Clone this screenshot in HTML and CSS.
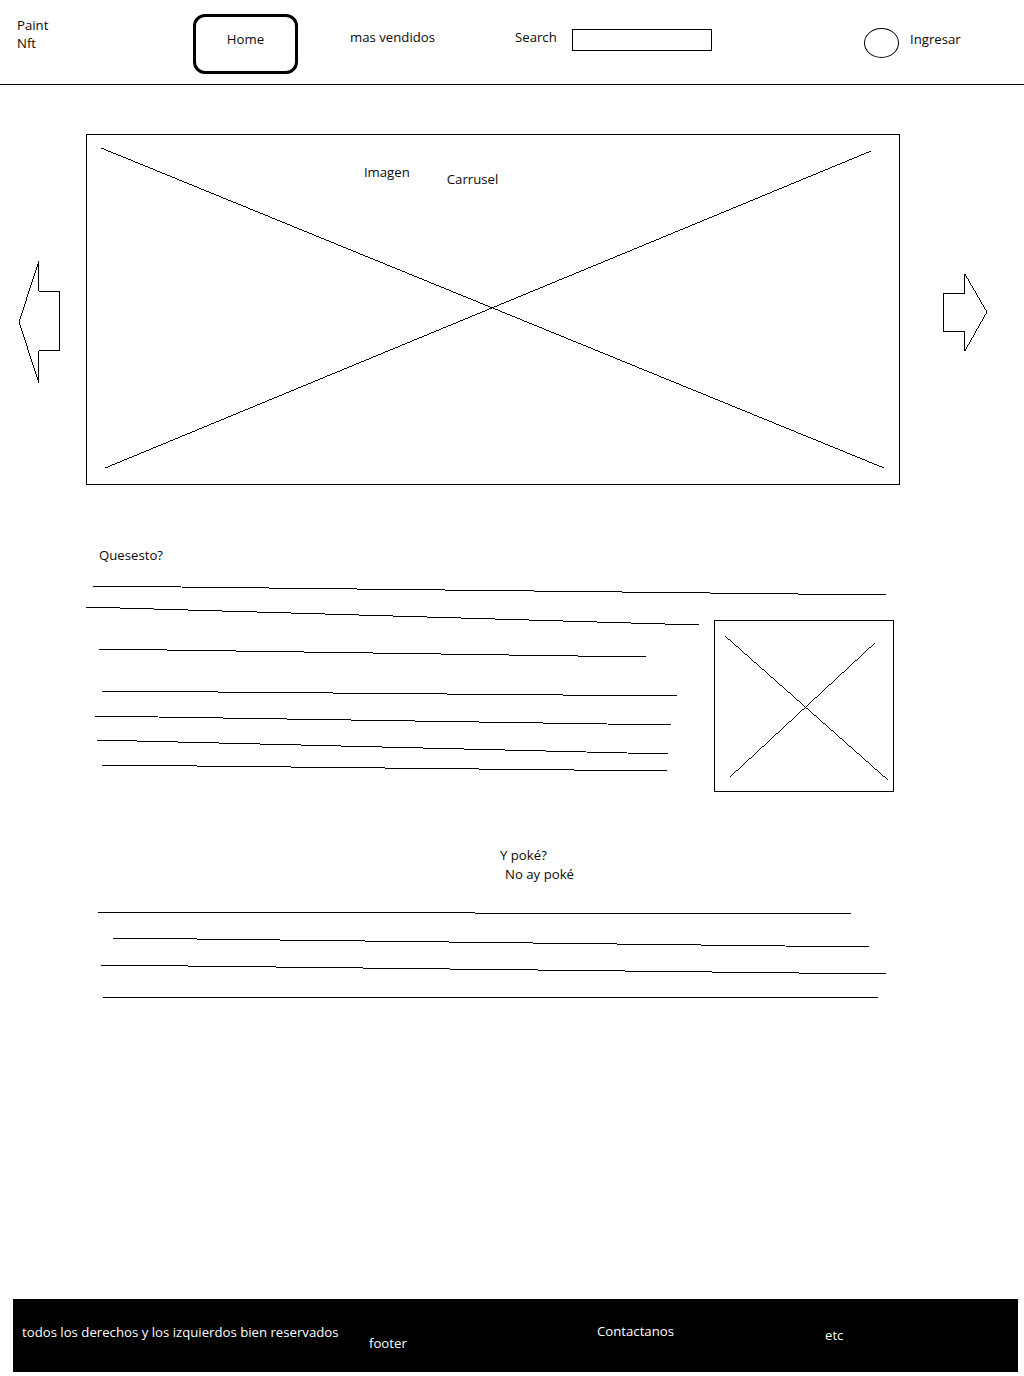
FILE: index.html
```html
<!DOCTYPE html>
<html lang="es">
  <head>
    <meta charset="UTF-8" />
    <title>Paint Nft</title>
    <link rel="stylesheet" href="styles.css">
  </head>
  <body>
    <header>
      <div class="logo">Paint<br>Nft</div>
      <button class="home">Home</button>
      <a class="nav-link">mas vendidos</a>
      <label class="search-label" for="search">Search</label>
      <input class="search" id="search" type="text">
      <span class="avatar"></span>
      <a class="login">Ingresar</a>
    </header>

    <main>
      <section class="carousel">
        <svg class="arrow left" width="86" height="351" viewBox="0 134 86 351">
          <polygon points="39,261 39,291 60,291 60,351 39,351 39,383 19,322" />
        </svg>
        <div class="slide">
          <svg class="cross" viewBox="0 0 815 351" preserveAspectRatio="none">
            <line x1="14" y1="13" x2="800" y2="335" />
            <line x1="787" y1="16" x2="18" y2="335" />
          </svg>
          <span class="label">Imagen</span>
          <span class="label low">Carrusel</span>
        </div>
        <svg class="arrow right" width="124" height="351" viewBox="900 134 124 351">
          <polygon points="965,274 965,293 944,293 944,332 965,332 965,351 987,312" />
        </svg>
      </section>

      <section class="about">
        <h2>Quesesto?</h2>
        <svg class="lines" width="810" height="20" viewBox="86 580 810 20">
          <line x1="92" y1="586" x2="886" y2="595" />
        </svg>
        <div class="about-body">
          <svg class="lines" width="614" height="180" viewBox="86 600 614 180">
            <line x1="86" y1="607" x2="699" y2="625" />
            <line x1="98" y1="649" x2="646" y2="657" />
            <line x1="102" y1="691" x2="677" y2="696" />
            <line x1="94" y1="716" x2="671" y2="725" />
            <line x1="96" y1="740" x2="668" y2="754" />
            <line x1="102" y1="765" x2="667" y2="771" />
          </svg>
          <div class="thumb">
            <svg class="cross" viewBox="0 0 180 172" preserveAspectRatio="none">
              <line x1="10" y1="15" x2="175" y2="161" />
              <line x1="162" y1="22" x2="15" y2="158" />
            </svg>
          </div>
        </div>
      </section>

      <section class="poke">
        <p class="q">Y poké?</p>
        <p class="a">No ay poké</p>
        <svg class="lines" width="814" height="110" viewBox="86 900 814 110">
          <line x1="98" y1="912" x2="851" y2="914" />
          <line x1="112" y1="938" x2="869" y2="947" />
          <line x1="100" y1="965" x2="886" y2="974" />
          <line x1="103" y1="997" x2="878" y2="998" />
        </svg>
      </section>
    </main>

    <footer>
      <span class="rights">todos los derechos y los izquierdos bien reservados</span>
      <span class="foot-label">footer</span>
      <a class="contact">Contactanos</a>
      <span class="etc">etc</span>
    </footer>
  </body>
</html>
```

FILE: styles.css
```css
body {
  font-family: "Open Sans", "Noto Sans", sans-serif;
  font-size: 13.2px;
  line-height: 18px;
  color: #0a0a0a;
  background: #fff;
  margin: 0;
  min-height: 100vh;
  display: flex;
  flex-direction: column;
}
svg line,
svg polygon {
  stroke: #000;
  stroke-width: 1;
  fill: none;
  shape-rendering: crispEdges;
}

/* header */
header {
  height: 85px;
  box-sizing: border-box;
  border-bottom: 1px solid #000;
  display: flex;
  align-items: flex-start;
  padding-left: 17px;
}
.logo {
  width: 176px;
  margin-top: 16px;
}
.home {
  width: 105px;
  height: 60px;
  margin-top: 14px;
  box-sizing: border-box;
  border: 3px solid #000;
  border-radius: 12px;
  background: #fff;
  font: inherit;
  color: inherit;
  padding: 13px 0 0;
  display: flex;
  justify-content: center;
  align-items: flex-start;
}
.nav-link {
  width: 165px;
  margin: 28px 0 0 52px;
}
.search-label {
  width: 57px;
  margin-top: 28px;
}
.search {
  width: 140px;
  height: 22px;
  box-sizing: border-box;
  margin: 29px 0 0;
  border: 1px solid #000;
  padding: 0;
}
.avatar {
  width: 35px;
  height: 30px;
  box-sizing: border-box;
  border: 1px solid #000;
  border-radius: 50%;
  margin: 28px 0 0 152px;
}
.login {
  margin: 30px 0 0 11px;
}

/* carousel */
.carousel {
  display: flex;
  margin-top: 49px;
}
.slide {
  width: 815px;
  height: 351px;
  box-sizing: border-box;
  border: 1px solid #000;
  position: relative;
  display: flex;
  align-items: flex-start;
  padding-left: 277px;
}
.cross {
  position: absolute;
  inset: 0;
  width: 100%;
  height: 100%;
}
.label {
  position: relative;
  margin-top: 28px;
}
.label.low {
  margin: 35px 0 0 37px;
}

/* text blocks */
.about {
  padding-left: 86px;
}
.about h2 {
  font-size: inherit;
  font-weight: normal;
  margin: 61px 0 0 13px;
  height: 34px;
}
.lines {
  display: block;
}
.about-body {
  display: flex;
  align-items: flex-start;
}
.thumb {
  width: 180px;
  height: 172px;
  box-sizing: border-box;
  border: 1px solid #000;
  margin: 20px 0 0 14px;
  position: relative;
}
.poke {
  padding-left: 86px;
}
.poke p {
  margin: 0;
  line-height: 19px;
}
.poke .q {
  margin: 54px 0 0 414px;
}
.poke .a {
  margin-left: 419px;
}
.poke .lines {
  margin-top: 16px;
}

/* footer */
footer {
  margin: auto 6px 4px 13px;
  height: 73px;
  background: #000;
  color: #fff;
  display: flex;
  align-items: flex-start;
  padding-left: 9px;
}
.rights {
  width: 347px;
  margin-top: 24px;
}
.foot-label {
  width: 228px;
  margin-top: 35px;
}
.contact {
  width: 228px;
  margin-top: 23px;
}
.etc {
  margin-top: 27px;
}
```
